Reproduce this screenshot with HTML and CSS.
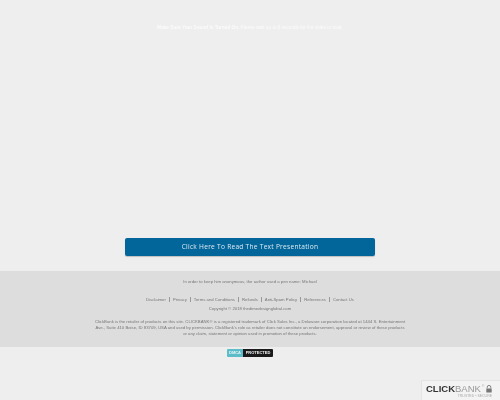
FILE: index.html
```html
<!DOCTYPE html>
<html lang="en">
<head>
<meta charset="utf-8">
<title>Text Presentation</title>
<link rel="stylesheet" href="styles.css">
</head>
<body>
<main class="hero">
  <p class="notice"><strong>Make Sure Your Sound Is Turned On.</strong> Please wait up to 8 seconds for the video to load.</p>
  <a class="cta" href="#">Click Here To Read The Text Presentation</a>
</main>
<footer class="footer">
  <p class="pen">In order to keep him anonymous, the author used a pen name: Michael</p>
  <nav class="links">
    <a href="#">Disclaimer</a><a href="#">Privacy</a><a href="#">Terms and Conditions</a><a href="#">Refunds</a><a href="#">Anti-Spam Policy</a><a href="#">References</a><a href="#">Contact Us</a>
  </nav>
  <p class="copy">Copyright © 2018 thedimedesignglobal.com</p>
  <p class="legal">ClickBank is the retailer of products on this site. CLICKBANK® is a registered trademark of Click Sales Inc., a Delaware corporation located at 1444 S. Entertainment Ave., Suite 410 Boise, ID 83709, USA and used by permission. ClickBank's role as retailer does not constitute an endorsement, approval or review of these products or any claim, statement or opinion used in promotion of these products.</p>
</footer>
<div class="dmca"><span class="dmca-l">DMCA</span><span class="dmca-r">PROTECTED</span></div>
<aside class="cb">
  <div class="cb-logo"><b>CLICK</b><span>BANK</span><sup>®</sup>
    <svg class="cb-lock" width="6" height="8" viewBox="0 0 6 8"><path d="M1.2 3.5V2.2a1.8 1.8 0 0 1 3.6 0v1.3" fill="none" stroke="#777" stroke-width="0.9"/><rect x="0.3" y="3.4" width="5.4" height="4.2" rx="0.5" fill="#777"/></svg>
  </div>
  <div class="cb-sub">TRUSTED • SECURE</div>
</aside>
</body>
</html>
```
FILE: styles.css
```css
html, body { margin: 0; padding: 0; }
html { background: #eeeeee; }
body {
  height: 400px;
  overflow: hidden;
  background: #eeeeee;
  font-family: "Liberation Sans", Arial, sans-serif;
  color: #666;
  position: relative;
  filter: blur(0.35px);
}
p { margin: 0; }
.hero {
  height: 271px;
  box-sizing: border-box;
  padding-top: 24px;
  display: flex;
  flex-direction: column;
  align-items: center;
}
.notice {
  font-size: 4.7px;
  line-height: 7px;
  color: #fbfbfb;
  text-align: center;
  white-space: nowrap;
}
.cta {
  margin-top: 207px;
  width: 250px;
  height: 18px;
  line-height: 18px;
  text-align: center;
  background: #02669b;
  border-radius: 2px;
  box-shadow: 0 1px 1px rgba(0, 0, 0, 0.2);
  color: #dfeaf2;
  font-family: "Open Sans", "Liberation Sans", sans-serif;
  font-size: 6.6px;
  letter-spacing: 0.26px;
  text-decoration: none;
}
.footer {
  height: 76px;
  box-sizing: border-box;
  background: #dddddd;
  padding-top: 8px;
  text-align: center;
  font-size: 4.25px;
  line-height: 6px;
  color: #777;
}
.links {
  margin-top: 12px;
  display: flex;
  justify-content: center;
}
.links a {
  color: #777;
  text-decoration: none;
  padding: 0 3px;
  border-right: 0.5px solid #999;
  height: 5px;
  line-height: 6px;
}
.links a:last-child { border-right: 0; }
.copy { margin-top: 4px; }
.legal {
  width: 311px;
  margin: 7px auto 0;
}
.dmca {
  display: flex;
  width: 46px;
  height: 8px;
  margin: 2px auto 0;
  font-size: 4px;
  line-height: 8px;
  font-weight: bold;
  text-align: center;
  border-radius: 1px;
  overflow: hidden;
}
.dmca-l { width: 16px; background: #5cbdc9; color: #e8f6f8; }
.dmca-r { flex: 1; background: #1a1a1a; color: #f2f2f2; }
.cb {
  position: absolute;
  right: 0;
  bottom: 0;
  width: 79px;
  height: 20px;
  box-sizing: border-box;
  background: #f3f3f3;
  border: 1px solid #e4e4e4;
  border-width: 1px 0 0 1px;
  padding: 3px 0 0 4px;
}
.cb-logo {
  display: flex;
  align-items: flex-start;
  font-size: 9.5px;
  line-height: 10px;
  letter-spacing: 0;
}
.cb-logo b { color: #333; }
.cb-logo span { color: #999; }
.cb-logo sup { font-size: 3px; line-height: 5px; color: #999; vertical-align: baseline; margin: 0 2px 0 1px; }
.cb-lock { margin-top: 1px; }
.cb-sub {
  font-size: 3.5px;
  line-height: 4px;
  color: #aaa;
  text-align: right;
  padding-right: 8px;
}
```
